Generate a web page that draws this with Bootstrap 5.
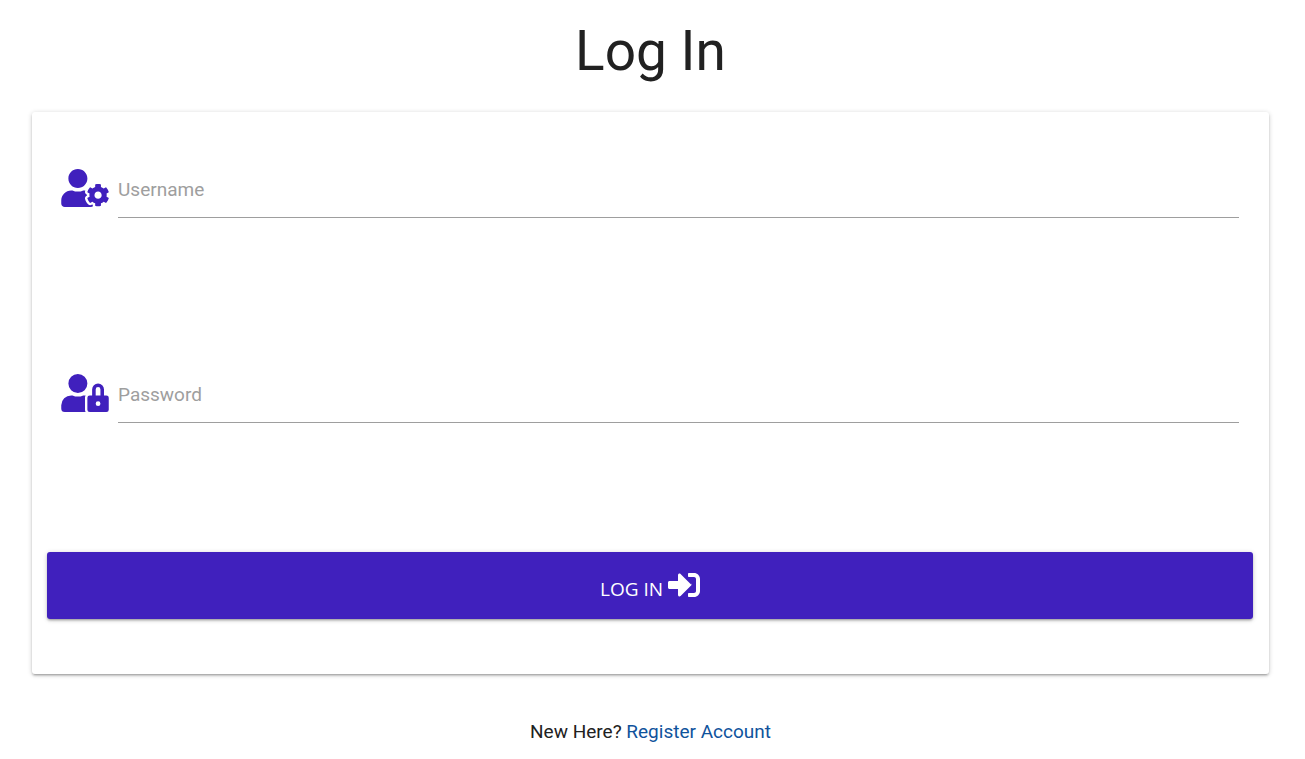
<!DOCTYPE html>
<html lang="en">
<head>
<meta charset="utf-8">
<meta name="viewport" content="width=device-width, initial-scale=1">
<title>Log In</title>
<link href="https://cdn.jsdelivr.net/npm/bootstrap@5.3.0/dist/css/bootstrap.min.css" rel="stylesheet">
<style>
  :root { --brand: #4020bd; }
  body { font-family: Roboto, "Noto Sans", sans-serif; font-size: 19px; line-height: 28px; color: #212121; background: #fff; }
  .login-page { padding: 20px 36px 12px 32px; }
  .login-title { font-size: 55px; line-height: 62px; font-weight: 400; margin-bottom: 30px; }
  .raised { box-shadow: 0 2px 2px 0 rgba(0,0,0,.14), 0 3px 1px -2px rgba(0,0,0,.12), 0 1px 5px 0 rgba(0,0,0,.2); }
  .login-card { border-radius: 3px; padding: 46px 16px 55px 15px; margin-bottom: 44px; background: #fff; }
  .field { gap: 9px; padding: 0 14px; margin-bottom: 145px; }
  .field + .field { margin-bottom: 129px; }
  .field svg { width: 48px; height: 38px; margin-top: 11px; fill: var(--brand); }
  .field-label { top: 18px; left: 0; color: #9e9e9e; pointer-events: none; transition: top .2s; }
  .line-input { border: 0; border-bottom: 1px solid #9e9e9e; border-radius: 0; padding: 4px 0 0; height: 60px; font-size: 19px; background: transparent; }
  .line-input:focus { border-color: var(--brand); box-shadow: 0 1px 0 0 var(--brand); background: transparent; }
  .line-input:focus + .field-label, .line-input:not(:placeholder-shown) + .field-label { top: -12px; color: var(--brand); }
  .login-btn { --bs-btn-color: #fff; --bs-btn-bg: var(--brand); --bs-btn-hover-color: #fff; --bs-btn-hover-bg: #5233cf; --bs-btn-active-color: #fff; --bs-btn-active-bg: #351aa0; border: 0; border-radius: 3px; height: 67px; padding: 0 0 2px; font-family: "Open Sans", "Noto Sans", sans-serif; font-size: 19px; line-height: 32px; gap: 5px; }
  .login-btn span { padding-top: 8px; }
  .login-btn svg { width: 32px; height: 32px; fill: #fff; }
  .register { color: #0f539c; }
</style>
</head>
<body>
<main class="login-page">
  <h1 class="login-title text-center">Log In</h1>
  <form class="login-card raised">
    <div class="field d-flex align-items-start">
      <svg class="flex-shrink-0" viewBox="0 0 640 512" aria-hidden="true"><path d="M610.5 373.3c2.6-14.1 2.6-28.5 0-42.6l25.8-14.9c3-1.7 4.3-5.2 3.3-8.5-6.7-21.6-18.2-41.2-33.2-57.4-2.3-2.5-6-3.1-9-1.4l-25.8 14.9c-10.9-9.3-23.4-16.5-36.9-21.3v-29.8c0-3.4-2.4-6.4-5.7-7.1-22.3-5-45-4.8-66.2 0-3.3.7-5.7 3.7-5.7 7.1v29.8c-13.5 4.8-26 12-36.9 21.3l-25.8-14.9c-2.9-1.7-6.7-1.1-9 1.4-15 16.2-26.5 35.8-33.2 57.4-1 3.3.4 6.8 3.3 8.5l25.8 14.9c-2.6 14.1-2.6 28.5 0 42.6l-25.8 14.9c-3 1.7-4.3 5.2-3.3 8.5 6.7 21.6 18.2 41.1 33.2 57.4 2.3 2.5 6 3.1 9 1.4l25.8-14.9c10.9 9.3 23.4 16.5 36.9 21.3v29.8c0 3.4 2.4 6.4 5.7 7.1 22.3 5 45 4.8 66.2 0 3.3-.7 5.7-3.7 5.7-7.1v-29.8c13.5-4.8 26-12 36.9-21.3l25.8 14.9c2.9 1.7 6.7 1.1 9-1.4 15-16.2 26.5-35.8 33.2-57.4 1-3.3-.4-6.8-3.3-8.5l-25.8-14.9zM496 400.5c-26.8 0-48.5-21.8-48.5-48.5s21.8-48.5 48.5-48.5 48.5 21.8 48.5 48.5-21.7 48.5-48.5 48.5zM224 256c70.7 0 128-57.3 128-128S294.7 0 224 0 96 57.3 96 128s57.3 128 128 128zm201.2 226.5c-2.3-1.2-4.6-2.6-6.8-3.9l-7.9 4.6c-6 3.4-12.8 5.3-19.6 5.3-10.9 0-21.4-4.6-28.9-12.6-18.3-19.8-32.3-43.9-40.2-69.6-5.5-17.7 1.9-36.4 17.9-45.7l7.9-4.6c-.1-2.6-.1-5.2 0-7.8l-7.9-4.6c-16-9.2-23.4-28-17.9-45.7.9-2.9 2.2-5.8 3.2-8.7-3.8-.3-7.5-1.2-11.4-1.2h-16.7c-22.2 10.2-46.9 16-72.9 16s-50.6-5.8-72.9-16h-16.7C60.2 288 0 348.2 0 422.4V464c0 26.5 21.5 48 48 48h352c10.1 0 19.5-3.2 27.2-8.5-1.2-3.8-2-7.7-2-11.8v-9.2z"/></svg>
      <div class="position-relative flex-grow-1">
        <input class="form-control line-input" type="text" id="username" placeholder=" " autocomplete="username">
        <label class="field-label position-absolute" for="username">Username</label>
      </div>
    </div>
    <div class="field d-flex align-items-start">
      <svg class="flex-shrink-0" viewBox="0 0 640 512" aria-hidden="true"><path d="M224 256A128 128 0 1 0 96 128a128 128 0 0 0 128 128zm96 64a63.08 63.08 0 0 1 8.1-30.5c-4.8-.5-9.5-1.5-14.5-1.5h-16.7a174.08 174.08 0 0 1-145.8 0h-16.7A134.43 134.43 0 0 0 0 422.4V464a48 48 0 0 0 48 48h280.9a63.54 63.54 0 0 1-8.9-32zm288-32h-32v-80a80 80 0 0 0-160 0v80h-32a32 32 0 0 0-32 32v160a32 32 0 0 0 32 32h224a32 32 0 0 0 32-32V320a32 32 0 0 0-32-32zM496 432a32 32 0 1 1 32-32 32 32 0 0 1-32 32zm32-144h-64v-80a32 32 0 0 1 64 0z"/></svg>
      <div class="position-relative flex-grow-1">
        <input class="form-control line-input" type="password" id="password" placeholder=" " autocomplete="current-password">
        <label class="field-label position-absolute" for="password">Password</label>
      </div>
    </div>
    <button class="btn login-btn raised w-100 d-flex justify-content-center align-items-center" type="submit">
      <span>LOG IN</span>
      <svg viewBox="0 0 512 512" aria-hidden="true"><path d="M416 448h-84c-6.6 0-12-5.4-12-12v-40c0-6.6 5.4-12 12-12h84c17.7 0 32-14.3 32-32V160c0-17.7-14.3-32-32-32h-84c-6.6 0-12-5.4-12-12V76c0-6.6 5.4-12 12-12h84c53 0 96 43 96 96v192c0 53-43 96-96 96zm-47-201L201 79c-15-15-41-4.5-41 17v96H24c-13.3 0-24 10.7-24 24v80c0 13.3 10.7 24 24 24h136v96c0 21.5 26 32 41 17l168-168c9.3-9.4 9.3-24.6 0-34z"/></svg>
    </button>
  </form>
  <p class="text-center mb-0">New Here? <a class="register text-decoration-none" href="#register">Register Account</a></p>
</main>
<script src="https://cdn.jsdelivr.net/npm/bootstrap@5.3.0/dist/js/bootstrap.bundle.min.js"></script>
</body>
</html>
